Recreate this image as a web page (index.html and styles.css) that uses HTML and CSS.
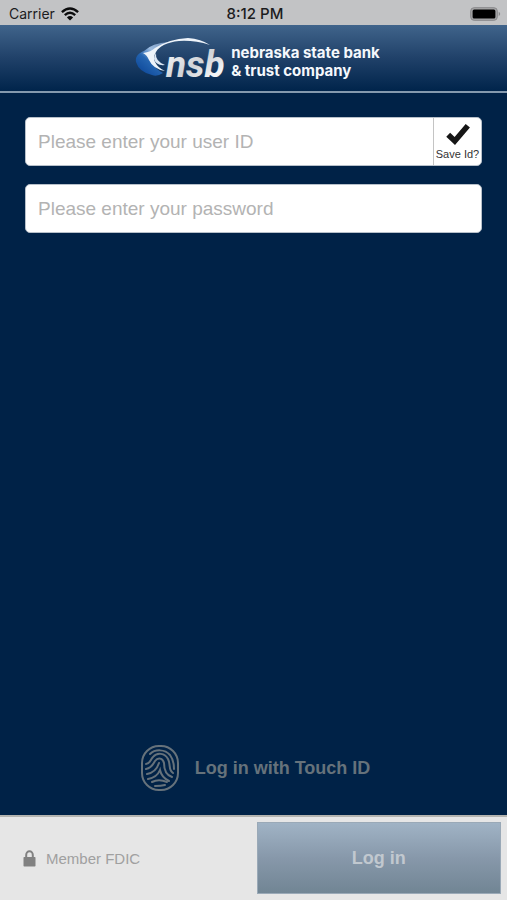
FILE: index.html
```html
<!DOCTYPE html>
<html lang="en">
<head>
<meta charset="utf-8">
<meta name="viewport" content="width=device-width, initial-scale=1">
<title>Nebraska State Bank &amp; Trust Company</title>
<link rel="stylesheet" href="styles.css">
</head>
<body>
<div class="status">
  <div class="carrier">
    <span>Carrier</span>
    <svg width="18" height="14" viewBox="0 0 18 14" aria-hidden="true">
      <g fill="none" stroke="#0c0c0d" stroke-width="2.4">
        <path d="M.9 5.1Q9-2.3 17.1 5.1"/>
        <path d="M3.8 8.2Q9 3.5 14.2 8.2"/>
      </g>
      <path d="M9 13.6 5.9 10.4Q9 7.8 12.1 10.4Z" fill="#0c0c0d"/>
    </svg>
  </div>
  <span class="clock">8:12 PM</span>
  <svg class="battery" width="31" height="14" viewBox="0 0 31 14" aria-hidden="true">
    <rect x=".7" y=".7" width="26.6" height="12.6" rx="3.4" fill="#a5a5a7" stroke="#88888a" stroke-width="1"/>
    <rect x="2.6" y="2.6" width="22.8" height="8.8" rx="1.5"/>
    <path d="M28.7 4.8q3 2.2 0 4.4z" fill="#88888a"/>
  </svg>
</div>
<header class="brand">
  <svg width="94" height="60" viewBox="0 -8 94 60" aria-hidden="true">
    <defs>
      <linearGradient id="orb" x1="0" y1="1" x2=".8" y2="0">
        <stop offset="0" stop-color="#063f93"/><stop offset=".45" stop-color="#2464b0"/><stop offset=".7" stop-color="#9dbce0"/><stop offset="1" stop-color="#7897bf"/>
      </linearGradient>
      <linearGradient id="metal" x1="0" y1="0" x2="1" y2="1">
        <stop offset="0" stop-color="#fff"/><stop offset=".5" stop-color="#d0d3d7"/><stop offset=".8" stop-color="#f5f5f7"/><stop offset="1" stop-color="#c9ccd1"/>
      </linearGradient>
    </defs>
    <path d="M1 26C0 20 4 17 9 15Q17 7 34 6Q20 11 16 19Q15 30 28 37Q22 41 17 39Q4 36 1 26Z" fill="url(#orb)"/>
    <path d="M8 17Q16 16 20 12Q34 3 53 2Q66 3 75 9Q59 4 44 5Q26 7 21 16Q18 21 20 26Q23 32 30 35Q18 33 14 24Q12 19 8 17Z" fill="#eef4fa"/>
    <path d="M21 17Q20 25 30 29Q21 30 19 23Q19 20 21 17Z" fill="#dce7f3"/>
    <text class="monogram" x="31" y="41" fill="url(#metal)">nsb</text>
  </svg>
  <h1 class="name">nebraska state bank<br>&amp; trust company</h1>
</header>
<form class="login" onsubmit="return false">
  <main class="fields">
    <div class="field">
      <input class="entry" type="text" aria-label="User ID" placeholder="Please enter your user ID">
      <label class="save">
        <input class="save-box" type="checkbox" checked>
        <svg width="26" height="23" viewBox="0 0 26 23" aria-hidden="true">
          <path d="M3.2 11.7 9.8 18 22.8 2.8" fill="none" stroke="#161616" stroke-width="5.6"/>
        </svg>
        <span>Save Id?</span>
      </label>
    </div>
    <div class="field">
      <input class="entry" type="password" aria-label="Password" placeholder="Please enter your password">
    </div>
    <button class="touch" type="button">
      <svg width="38" height="46" viewBox="0 0 38 46" fill="none" stroke="#66727b" stroke-width="2" stroke-linecap="round" aria-hidden="true">
        <rect x="1" y="1" width="36" height="44" rx="17"/>
        <path d="M9 9C14 4 24 4 29 10C32 14 33 18 33 24"/>
        <path d="M5 19C9 19 9 15 12 12C16 7 24 8 27 14C30 20 27 25 32 28"/>
        <path d="M5 24C11 23 12 19 14 16C17 12 22 13 23 18C23 25 25 30 31 32"/>
        <path d="M6 29C12 28 16 24 18 18"/>
        <path d="M7 34C13 33 17 30 19 25C20 30 24 34 28 36"/>
        <path d="M11 37C15 35 21 35 26 37"/>
        <path d="M14 41C18 41 20 41 24 40"/>
      </svg>
      <span>Log in with Touch ID</span>
    </button>
  </main>
  <footer class="bar">
    <div class="member">
      <svg width="13" height="17" viewBox="0 0 13 17" aria-hidden="true">
        <path d="M3.2 8V5a3.3 3.7 0 0 1 6.6 0v3" fill="none" stroke="#818181" stroke-width="2"/>
        <rect x=".5" y="7" width="12" height="9.5" rx=".8" fill="#818181"/>
      </svg>
      <span>Member FDIC</span>
    </div>
    <button class="submit" type="submit" disabled>Log in</button>
  </footer>
</form>
</body>
</html>
```
FILE: styles.css
```css
* { box-sizing: border-box; }

body {
  margin: 0;
  min-height: 100vh;
  display: flex;
  flex-direction: column;
  background: #002247;
  font-family: "Liberation Sans", Arial, sans-serif;
}

svg { display: block; flex: none; }
button, input { font-family: inherit; margin: 0; }

.status {
  height: 25px;
  display: grid;
  grid-template-columns: 1fr auto 1fr;
  align-items: center;
  padding: 2px 6px 0 9px;
  background: #c2c3c5;
  color: #1c1c1e;
  font-family: Inter, sans-serif;
  font-size: 14px;
}
.carrier { display: flex; align-items: center; gap: 6px; }
.clock { font-size: 15px; font-weight: 500; }
.battery { justify-self: end; }

.brand {
  height: 68px;
  display: flex;
  justify-content: center;
  align-items: center;
  gap: 2px;
  padding-left: 8px;
  background: linear-gradient(#40648b, #204169 50%, #00244b);
  border-bottom: 2px solid #8499ae;
}
.monogram {
  font-family: Roboto, sans-serif;
  font-size: 37px;
  font-weight: 700;
  font-style: italic;
}
.name {
  margin: 0;
  padding-top: 8px;
  color: #f5f8fc;
  font-family: Inter, sans-serif;
  font-size: 15px;
  font-weight: 700;
  line-height: 18px;
}

.login { flex: 1; display: flex; flex-direction: column; }
.fields {
  flex: 1;
  display: flex;
  flex-direction: column;
  gap: 18px;
  padding: 24px 25px;
}
.field {
  height: 49px;
  display: flex;
  background: #fff;
  border: 1px solid #b7c0ca;
  border-radius: 5px;
  overflow: hidden;
}
.entry {
  flex: 1;
  min-width: 0;
  padding: 0 12px;
  border: 0;
  background: transparent;
  font-size: 19px;
  outline: 0;
}
.entry::placeholder { color: #b3b3b3; }
.save {
  position: relative;
  width: 48px;
  display: flex;
  flex-direction: column;
  align-items: center;
  padding-top: 5px;
  gap: 2px;
  border-left: 1px solid #c4c4c4;
  color: #333;
  font-size: 11px;
  line-height: 13px;
  white-space: nowrap;
}
.save-box { position: absolute; inset: 0; appearance: none; }

.touch {
  align-self: center;
  display: flex;
  align-items: center;
  gap: 16px;
  margin-top: auto;
  padding: 0 0 0 4px;
  border: 0;
  background: none;
  color: #66727b;
  font-size: 18px;
  font-weight: 700;
}

.bar {
  height: 85px;
  display: grid;
  grid-template-columns: 1fr 1fr;
  gap: 6px;
  padding: 5px 6px 6px;
  background: #e6e6e6;
  border-top: 2px solid #b4b4b0;
}
.member {
  display: flex;
  align-items: center;
  gap: 10px;
  padding-left: 17px;
  color: #a0a0a0;
  font-size: 15px;
}
.submit {
  border: 1px solid #9aa9b7;
  background: linear-gradient(#a0b3c5, #8798aa 50%, #718594);
  color: #c1c8cf;
  font-size: 18px;
  font-weight: 700;
}
```
